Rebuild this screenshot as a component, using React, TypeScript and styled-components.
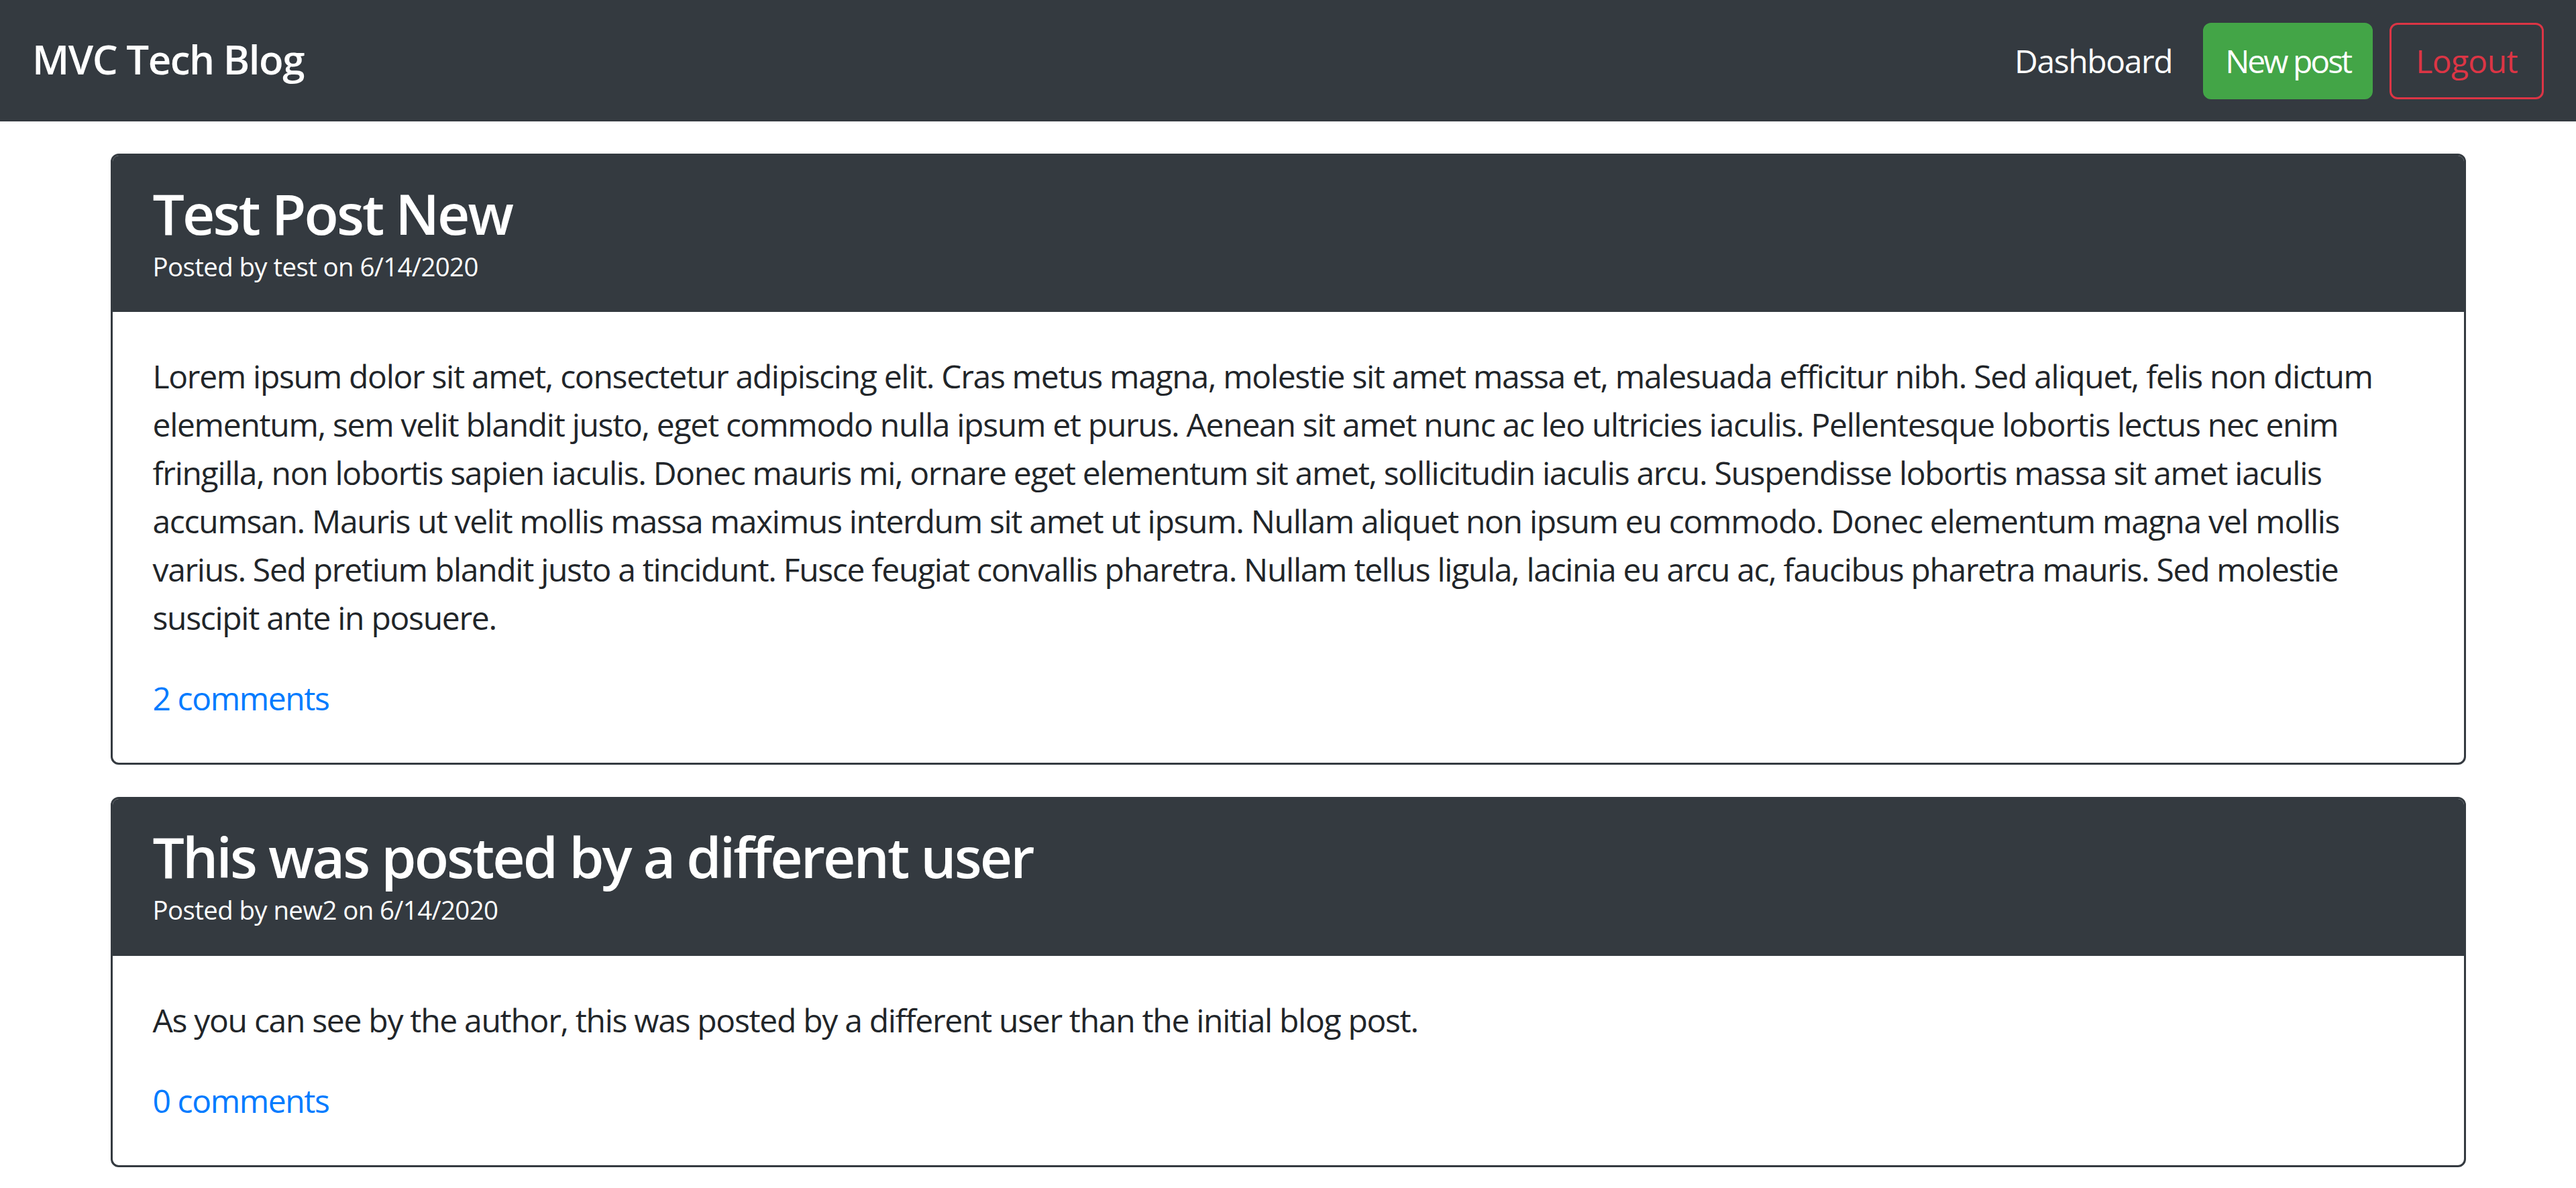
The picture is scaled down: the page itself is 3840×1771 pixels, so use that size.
import React from "react";
import styled, { createGlobalStyle } from "styled-components";

const FONT = `"Open Sans", "Noto Sans", "Liberation Sans", sans-serif`;

const GlobalStyle = createGlobalStyle`
  *, *::before, *::after { box-sizing: border-box; }
  html, body { margin: 0; padding: 0; background: #ffffff; }
  body {
    font-family: ${FONT};
    font-size: 48px;
    line-height: 1.5;
    color: #212529;
  }
`;

const Navbar = styled.nav`
  height: 181px;
  background: #343a40;
  display: flex;
  align-items: center;
  justify-content: space-between;
  padding: 0 48px;
`;

const Brand = styled.a`
  color: #ffffff;
  font-size: 60px;
  font-weight: 600;
  letter-spacing: -1.5px;
  text-decoration: none;
  margin-top: -6px;
`;

const NavRight = styled.div`
  display: flex;
  align-items: center;
`;

const NavLink = styled.a`
  color: #ffffff;
  font-size: 48px;
  letter-spacing: -1.4px;
  text-decoration: none;
  margin-right: 46px;
`;

const Button = styled.button<{ $variant: "success" | "outline-danger" }>`
  font-family: ${FONT};
  font-size: 48px;
  line-height: 72px;
  letter-spacing: ${(p) => (p.$variant === "success" ? "-3px" : "-0.6px")};
  padding: 18px ${(p) => (p.$variant === "success" ? "30px" : "36px")};
  border-radius: 12px;
  border: 3px solid ${(p) => (p.$variant === "success" ? "#43a547" : "#dc3545")};
  background: ${(p) => (p.$variant === "success" ? "#43a547" : "transparent")};
  color: ${(p) => (p.$variant === "success" ? "#ffffff" : "#dc3545")};
  & + & { margin-left: 25px; }
`;

const Main = styled.main`
  width: 3511px;
  margin: 0 auto;
  padding-top: 48px;
  padding-bottom: 48px;
  display: flex;
  flex-direction: column;
  gap: 48px;
`;

const Card = styled.article`
  border: 3px solid #343a40;
  border-radius: 12px;
  overflow: hidden;
  background: #ffffff;
`;

const CardHeader = styled.header`
  background: #343a40;
  color: #ffffff;
  padding: 36px 60px;
  border-bottom: 3px solid #343a40;
`;

const Title = styled.h3`
  margin: 0;
  font-size: 84px;
  line-height: 1.2;
  font-weight: 600;
  letter-spacing: -2.9px;
`;

const Meta = styled.div`
  font-size: 38.4px;
  line-height: 1.5;
  letter-spacing: -0.6px;
`;

const CardBody = styled.div`
  padding: 60px;
`;

const Text = styled.p`
  margin: 0 0 48px;
  letter-spacing: -1.3px;
`;

const CommentsLink = styled.a`
  color: #007bff;
  text-decoration: none;
  letter-spacing: -1.4px;
`;

type Post = { title: string; author: string; date: string; body: string; comments: number };

const posts: Post[] = [
  {
    title: "Test Post New",
    author: "test",
    date: "6/14/2020",
    body:
      "Lorem ipsum dolor sit amet, consectetur adipiscing elit. Cras metus magna, molestie sit amet massa et, malesuada efficitur nibh. Sed aliquet, felis non dictum elementum, sem velit blandit justo, eget commodo nulla ipsum et purus. Aenean sit amet nunc ac leo ultricies iaculis. Pellentesque lobortis lectus nec enim fringilla, non lobortis sapien iaculis. Donec mauris mi, ornare eget elementum sit amet, sollicitudin iaculis arcu. Suspendisse lobortis massa sit amet iaculis accumsan. Mauris ut velit mollis massa maximus interdum sit amet ut ipsum. Nullam aliquet non ipsum eu commodo. Donec elementum magna vel mollis varius. Sed pretium blandit justo a tincidunt. Fusce feugiat convallis pharetra. Nullam tellus ligula, lacinia eu arcu ac, faucibus pharetra mauris. Sed molestie suscipit ante in posuere.",
    comments: 2,
  },
  {
    title: "This was posted by a different user",
    author: "new2",
    date: "6/14/2020",
    body: "As you can see by the author, this was posted by a different user than the initial blog post.",
    comments: 0,
  },
];

export default function App() {
  return (
    <>
      <GlobalStyle />
      <Navbar>
        <Brand href="#">MVC Tech Blog</Brand>
        <NavRight>
          <NavLink href="#">Dashboard</NavLink>
          <Button $variant="success">New post</Button>
          <Button $variant="outline-danger">Logout</Button>
        </NavRight>
      </Navbar>
      <Main>
        {posts.map((p) => (
          <Card key={p.title}>
            <CardHeader>
              <Title>{p.title}</Title>
              <Meta>
                Posted by {p.author} on {p.date}
              </Meta>
            </CardHeader>
            <CardBody>
              <Text>{p.body}</Text>
              <CommentsLink href="#">{p.comments} comments</CommentsLink>
            </CardBody>
          </Card>
        ))}
      </Main>
    </>
  );
}
